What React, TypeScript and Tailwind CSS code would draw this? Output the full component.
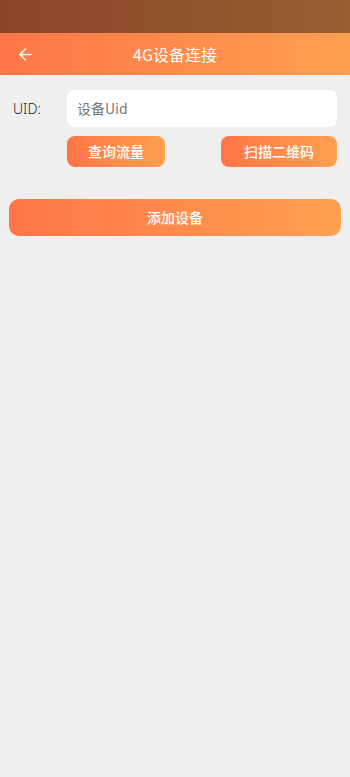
import { ArrowLeft } from "lucide-react";

const font = { fontFamily: '"Noto Sans CJK SC", "Noto Sans", sans-serif' };

export default function App() {
    return (
        <div className="min-h-[777px] w-[350px] bg-[#efefef]" style={font}>
            {/* Status bar */}
            <div className="h-[33px] bg-gradient-to-r from-[#8a4529] to-[#965f30]" />

            {/* Header */}
            <div className="relative flex h-[42px] items-center justify-center bg-gradient-to-r from-[#ff7548] to-[#ffa050]">
                <button className="absolute left-[16px] top-[12px] text-white">
                    <ArrowLeft size={19} strokeWidth={2} />
                </button>
                <h1 className="text-[16px] text-white">4G设备连接</h1>
            </div>

            {/* Form */}
            <div className="flex items-center pt-[15px]">
                <span className="w-[67px] pl-[13px] text-[14px] font-light text-[#222]" style={{ fontFamily: '"Noto Sans", sans-serif' }}>
                    UID:
                </span>
                <div className="flex h-[37px] w-[270px] items-center rounded-[8px] bg-white px-[10px] text-[14px] text-[#777]">
                    设备Uid
                </div>
            </div>
            <div className="mt-[9px] flex w-[337px] justify-between pl-[67px]">
                <button className="h-[31px] w-[98px] rounded-[8px] bg-gradient-to-r from-[#ff7548] to-[#ffa050] text-[14px] font-medium text-white">
                    查询流量
                </button>
                <button className="h-[31px] w-[116px] rounded-[8px] bg-gradient-to-r from-[#ff7548] to-[#ffa050] text-[14px] font-medium text-white">
                    扫描二维码
                </button>
            </div>

            <div className="mt-[32px] px-[9px]">
                <button className="h-[37px] w-full rounded-[10px] bg-gradient-to-r from-[#ff7548] to-[#ffa050] text-[14px] font-medium text-white">
                    添加设备
                </button>
            </div>
        </div>
    );
}
